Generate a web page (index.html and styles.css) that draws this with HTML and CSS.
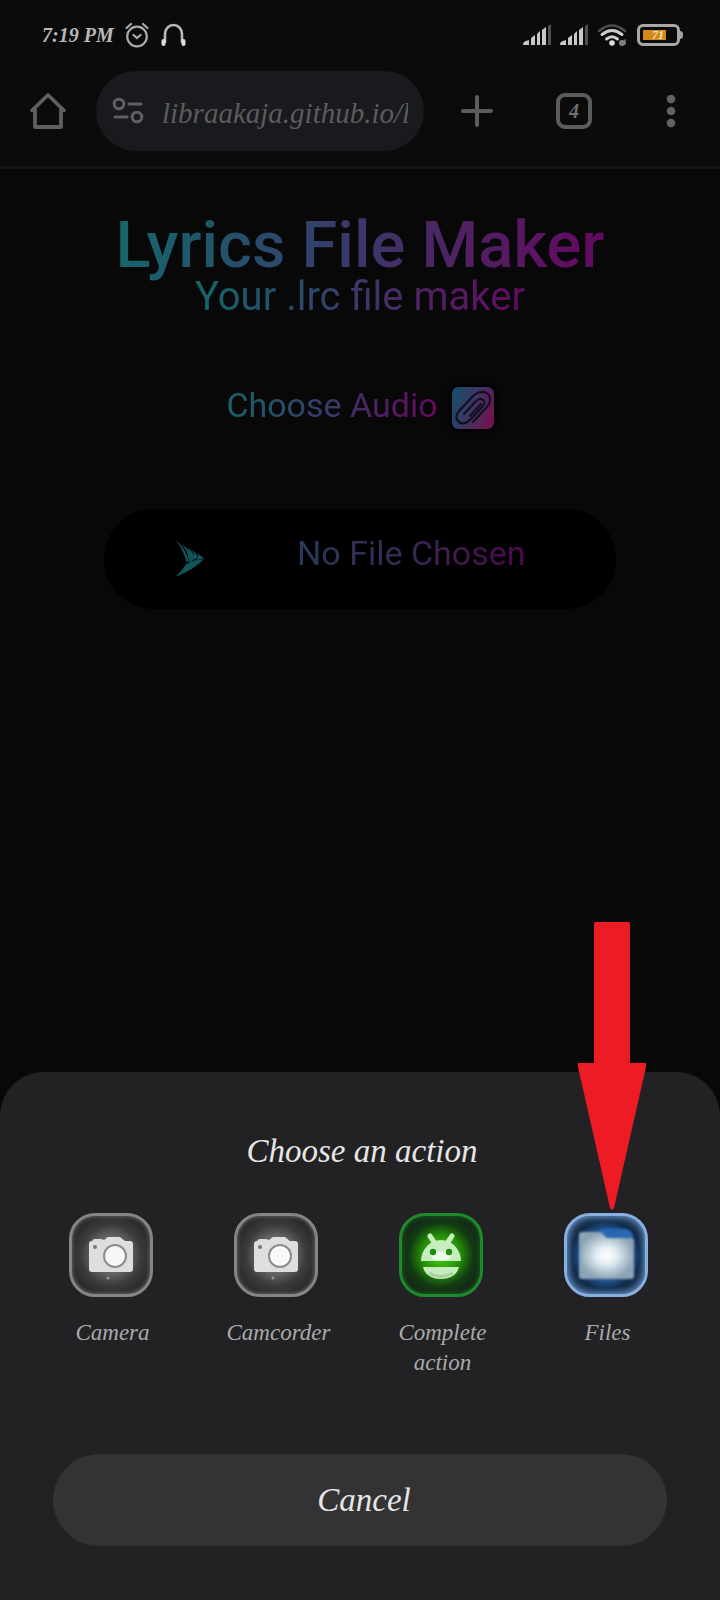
FILE: index.html
```html
<!DOCTYPE html>
<html lang="en">
<head>
<meta charset="utf-8">
<meta name="viewport" content="width=device-width, initial-scale=1">
<title>Lyrics File Maker</title>
<link rel="stylesheet" href="styles.css">
</head>
<body>
<header class="chrome">
  <div class="status">
    <div class="status-group">
      <time class="clock">7:19 PM</time>
      <svg class="glyph" width="24" height="26" viewBox="0 0 24 26" fill="none" stroke="#aaa" stroke-width="2.2" stroke-linecap="round"><circle cx="12" cy="14.500" r="9.800"/><path d="M1.500 6 6 2M22.500 6 18 2M8.500 13l3.500 3 3.500-3"/></svg>
      <svg class="glyph headset" width="26" height="24" viewBox="0 0 26 24" fill="none" stroke="#bbb" stroke-width="2.600" stroke-linecap="round"><path d="M5 19V11a8.500 9 0 0 1 17 0v8"/><path d="M3.500 18v3M23.500 18v3" stroke="#ddd" stroke-width="4"/></svg>
    </div>
    <div class="status-group right">
      <svg width="29" height="22" viewBox="0 0 29 22"><path fill="#c8c8c8" d="M0 21c0-3 2-4 6-5v5zM8 14l4-3v10H8zM14 10l3-3v14h-3zM19 6l4-3v18h-4z"/><path fill="#505050" d="M25 2l3-2v21h-3z"/></svg>
      <svg width="29" height="22" viewBox="0 0 29 22"><path fill="#c8c8c8" d="M0 21c0-3 2-4 6-5v5zM8 14l4-3v10H8zM14 10l3-3v14h-3zM19 6l4-3v18h-4z"/><path fill="#505050" d="M25 2l3-2v21h-3z"/></svg>
      <svg width="30" height="24" viewBox="0 0 30 24" fill="none" stroke-width="3" stroke-linecap="round"><path stroke="#4c4c4c" stroke-width="2.500" d="M2 8Q15-3 28 8"/><path stroke="#ccc" d="M5 11.500q10-8 20 0M9.500 16q5.500-4.500 11 0"/><circle cx="15" cy="20" r="2.800" fill="#ddd"/><circle cx="25" cy="20" r="2" stroke="#888" stroke-width="1.800"/><path stroke="#888" stroke-width="1.500" d="M23 20h5M28 17v4"/></svg>
      <div class="battery"><span class="charge">71</span></div>
    </div>
  </div>
  <nav class="toolbar" aria-label="Browser">
    <button class="tool" aria-label="Home"><svg width="38" height="38" viewBox="0 0 38 38" fill="none" stroke="#5f5f5f" stroke-width="3.800" stroke-linejoin="round" stroke-linecap="round"><path d="M3 18.500 19 3l16 15.500M6 18v17h26V18"/></svg></button>
    <div class="address">
      <svg width="32" height="28" viewBox="0 0 32 28" fill="none" stroke="#606062" stroke-width="3" stroke-linecap="round"><circle cx="7" cy="7" r="4.800"/><path d="M17 7h12M3 20h12"/><circle cx="25" cy="20" r="4.800"/></svg>
      <input class="url" type="text" aria-label="Address" value="libraakaja.github.io/l">
    </div>
    <div class="tools">
      <button class="tool" aria-label="New tab"><svg width="34" height="34" viewBox="0 0 34 34" stroke="#5c5c5c" stroke-width="4" stroke-linecap="round"><path d="M17 3v28M3 17h28"/></svg></button>
      <button class="tool" aria-label="4 open tabs"><span class="tab-count">4</span></button>
      <button class="tool" aria-label="Menu"><svg width="10" height="34" viewBox="0 0 10 34" fill="#626262"><circle cx="5" cy="5" r="4.300"/><circle cx="5" cy="17" r="4.300"/><circle cx="5" cy="29" r="4.300"/></svg></button>
    </div>
  </nav>
</header>

<main class="page">
  <h1 class="title tinted">Lyrics File Maker</h1>
  <p class="subtitle tinted">Your .lrc file maker</p>
  <button class="choose">
    <span class="tinted">Choose Audio</span>
    <svg class="clip" width="42" height="42" viewBox="0 0 42 42"><defs><linearGradient id="clipFill" x1="0" y1=".3" x2="1" y2=".7"><stop offset="0" stop-color="#174c66"/><stop offset=".5" stop-color="#403463"/><stop offset="1" stop-color="#73114f"/></linearGradient></defs><rect width="42" height="42" rx="6" fill="url(#clipFill)"/><path d="M12 27 24 14c5-5 11 0 7 5L19 32c-3 3-8 6-12 3-4-3-3-8 0-11L22 8c5-4 11-4 14-1s3 9-1 13L21 35M18 29l11-12" fill="none" stroke="#11101e" stroke-width="2.200" stroke-linecap="round" stroke-linejoin="round"/></svg>
  </button>
  <section class="player">
    <svg width="32" height="40" viewBox="0 0 32 40" fill="#12545a"><path d="M1 1q8 8 12 24l2-1Q12 8 1 1M7 5q7 6 8 18l3-1Q17 10 7 5M13 8q4 6 4 14l3-2q0-7-7-12M18 11q3 5 1 10l4-2q1-4-5-8M23 14q2 4-1 7l9-1zM1 38q8-7 12-15l18-4q-11 12-30 19"/></svg>
    <span class="file-name tinted">No File Chosen</span>
  </section>
</main>

<section class="sheet" role="dialog" aria-labelledby="sheet-title">
  <h2 class="sheet-title" id="sheet-title">Choose an action</h2>
  <div class="actions">
    <button class="action">
      <span class="tile"><svg viewBox="0 0 84 84"><use href="#camera"/></svg></span>
      <span class="label">Camera</span>
    </button>
    <button class="action">
      <span class="tile"><svg viewBox="0 0 84 84"><use href="#camera"/></svg></span>
      <span class="label">Camcorder</span>
    </button>
    <button class="action">
      <span class="tile green"><svg viewBox="0 0 84 84"><g fill="#c6eebc"><path d="M22 48a20 21 0 0 1 40 0zM24 54h36c-3 16-33 16-36 0z"/><path d="m31 23 4 6M53 23l-4 6" stroke="#c6eebc" stroke-width="5" stroke-linecap="round"/></g><ellipse cx="42" cy="43" rx="10" ry="5" fill="#e8fbe4"/><circle cx="34" cy="39" r="3.200" fill="#218b14"/><circle cx="50" cy="39" r="3.200" fill="#218b14"/><path d="M30 60q12 7 24 0" stroke="#a4d49a" stroke-width="3" fill="none"/></svg></span>
      <span class="label">Complete action</span>
    </button>
    <button class="action">
      <svg class="pointer" width="68" height="288" viewBox="0 0 68 288" aria-hidden="true"><path d="M16 2q0-2 2-2h32q2 0 2 2v139h16v4L36 286q-2 3-4 0L0 145v-4h16z" fill="#ed1c24"/></svg>
      <span class="tile blue"><svg viewBox="0 0 84 84"><defs><radialGradient id="folderFill"><stop offset="0" stop-color="#fff"/><stop offset=".35" stop-color="#e6f0f5"/><stop offset="1" stop-color="#8ca4b6"/></radialGradient><filter id="soft"><feGaussianBlur stdDeviation="1"/></filter></defs><path d="M36 16h25q8 0 8 10H43z" fill="#2767b3" filter="url(#soft)"/><path d="M15 22q0-3 3-3h19l6 6h24q3 0 3 3v35q0 3-3 3H18q-3 0-3-3z" fill="url(#folderFill)" filter="url(#soft)"/></svg></span>
      <span class="label">Files</span>
    </button>
  </div>
  <button class="cancel">Cancel</button>
</section>

<svg class="symbols" width="0" height="0" aria-hidden="true">
  <symbol id="camera" viewBox="0 0 84 84"><path d="M20 31q0-3 3-3l2-2h7l3 1 4-3h12l5 4h5q3 0 3 3v25q0 3-3 3H23q-3 0-3-3z" fill="#dedede"/><circle cx="46" cy="43" r="11" fill="#f8f8f8" stroke="#8c8c8c" stroke-width="2"/><circle cx="26" cy="34" r="2" fill="#777"/><circle cx="39" cy="65" r="1.500" fill="#999"/></symbol>
</svg>
</body>
</html>
```
FILE: styles.css
```css
* { box-sizing: border-box; }

body {
  margin: 0;
  min-height: 100vh;
  display: flex;
  flex-direction: column;
  background: #080808;
  font-family: "Liberation Serif", serif;
  font-style: italic;
}

button {
  padding: 0;
  border: 0;
  background: none;
  color: inherit;
  font: inherit;
}

svg { display: block; flex: none; }

.chrome {
  background: #0b0b0b;
  border-bottom: 3px solid #151515;
  padding-bottom: 15px;
}

.status {
  height: 70px;
  padding: 0 36px 0 42px;
  display: flex;
  align-items: center;
  justify-content: space-between;
}

.status-group { display: flex; align-items: center; gap: 11px; }
.right { gap: 8px; }
.clock { font-size: 20px; font-weight: 700; color: #b8b8b8; }

.battery {
  position: relative;
  width: 43px;
  height: 22px;
  margin: 0 4px 0 2px;
  padding: 3px;
  border: 3px solid #a8a8a8;
  border-radius: 6px;
}

.battery::after {
  content: "";
  position: absolute;
  left: calc(100% + 3px);
  top: 4px;
  width: 3px;
  height: 8px;
  border-radius: 0 3px 3px 0;
  background: #a0a0a0;
}

.charge {
  display: block;
  width: 23px;
  background: #d18a19;
  color: #f4dfb6;
  font-size: 12px;
  font-weight: 700;
  line-height: 10px;
  text-align: right;
  padding-right: 2px;
}

.toolbar { display: flex; align-items: center; height: 81px; }
.tool { flex: 1; height: 80px; display: grid; place-items: center; }
.toolbar > .tool { flex: none; width: 96px; }
.tools { flex: 1; display: flex; padding-left: 4px; }

.address {
  width: 328px;
  height: 80px;
  padding: 0 16px;
  border-radius: 40px;
  background: #191a1d;
  display: flex;
  align-items: center;
  gap: 18px;
}

.url {
  flex: 1;
  min-width: 0;
  padding: 4px 0 0;
  border: 0;
  outline: 0;
  background: none;
  color: #5c5c5e;
  font: italic 29px/40px "Liberation Serif", serif;
}

.tab-count {
  width: 36px;
  height: 36px;
  border: 4px solid #5c5c5c;
  border-radius: 9px;
  color: #707070;
  font-size: 20px;
  font-weight: 700;
  line-height: 28px;
  text-align: center;
}

.page {
  display: flex;
  flex-direction: column;
  align-items: center;
  padding-top: 36px;
  font-family: Roboto, sans-serif;
  font-style: normal;
}

.tinted {
  background: linear-gradient(90deg, #146669, #33406b 42%, #4d2463 68%, #650861);
  -webkit-background-clip: text;
  background-clip: text;
  color: transparent;
}

.title { margin: 0; font-size: 65px; font-weight: 500; line-height: 80px; }
.subtitle { margin: 0; font-size: 40px; line-height: 40px; margin-top: -8px; }

.choose {
  margin-top: 66px;
  display: flex;
  align-items: center;
  gap: 14px;
  font-size: 34px;
  line-height: 44px;
}

.choose .tinted { padding-bottom: 6px; }

.clip { border-radius: 6px; box-shadow: 0 0 4px 2px #000; }

.player {
  width: 71%;
  height: 100px;
  margin-top: 76px;
  padding: 0 90px 0 70px;
  border-radius: 50px;
  background: #000;
  display: flex;
  align-items: center;
  justify-content: space-between;
}

.file-name {
  padding-bottom: 12px;
  font-size: 34px;
  background-image: linear-gradient(90deg, #273b57, #382752 50%, #4b0849);
}

.sheet {
  margin-top: auto;
  padding: 56px 0 54px;
  border-radius: 44px 44px 0 0;
  background: #222224;
  text-align: center;
}

.sheet-title {
  margin: 0;
  padding-left: 4px;
  color: #e6e6e6;
  font-size: 33px;
  font-weight: 400;
  line-height: 46px;
}

.actions {
  display: grid;
  grid-template-columns: repeat(4, 1fr);
  margin: 39px 32px 0 28px;
}

.action {
  position: relative;
  display: flex;
  flex-direction: column;
  align-items: center;
  gap: 21px;
}

.tile {
  width: 84px;
  height: 84px;
  border: 3px solid #858585;
  border-radius: 26px;
  background: radial-gradient(circle, #a0a0a0 0, #6b6b6b 30%, #3b3b3b 55%, #2b2b2b 75%);
  box-shadow: inset 0 0 4px #777;
}

.tile svg { width: 84px; height: 84px; margin: -3px; }

.green {
  border-color: #1e8a2b;
  background: radial-gradient(circle, #48d010 0, #278f08 35%, #123c12 58%, #172719 75%);
  box-shadow: inset 0 0 5px #167020;
}

.blue {
  border-color: #87b0e0;
  background: radial-gradient(circle, #2e6fbd 0, #245796 45%, #102b49 62%, #1c344f 75%);
  box-shadow: inset 0 0 7px 1px #6f9fd8;
}

.label {
  width: 106px;
  padding-left: 4px;
  color: #aaaaac;
  font-size: 23px;
  line-height: 30px;
}

.pointer { position: absolute; left: calc(50% - 28px); bottom: calc(100% + 3px); }

.cancel {
  display: block;
  width: calc(100% - 106px);
  height: 92px;
  margin: 76px auto 0;
  padding-left: 8px;
  border-radius: 46px;
  background: #333335;
  color: #e6e6e6;
  font-size: 33px;
}

.symbols { position: absolute; }
```
